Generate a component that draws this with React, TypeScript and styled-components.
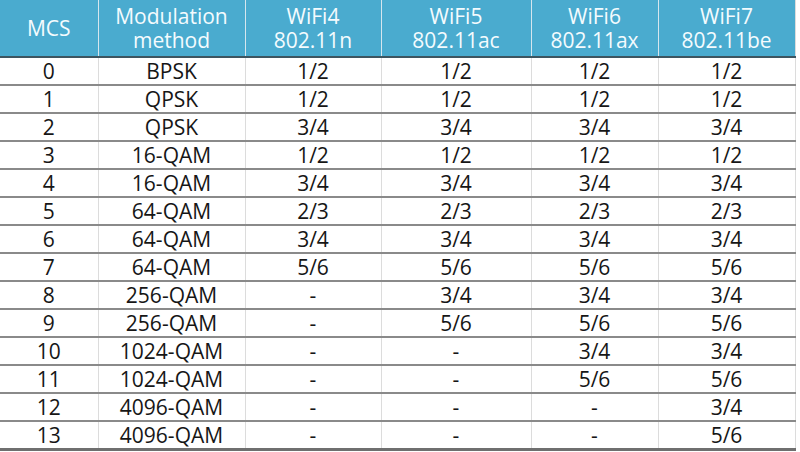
import { Fragment } from "react";
import styled, { createGlobalStyle } from "styled-components";

const GlobalStyle = createGlobalStyle`
   html, body {
      margin: 0;
      padding: 0;
      background: #ffffff;
   }
   body {
      font-family: "Open Sans", "Noto Sans", sans-serif;
   }
`;

const columns = [98, 147, 136, 150, 127, 137];

const headers = [
   ["MCS"],
   ["Modulation", "method"],
   ["WiFi4", "802.11n"],
   ["WiFi5", "802.11ac"],
   ["WiFi6", "802.11ax"],
   ["WiFi7", "802.11be"],
];

const rows: string[][] = [
   ["0", "BPSK", "1/2", "1/2", "1/2", "1/2"],
   ["1", "QPSK", "1/2", "1/2", "1/2", "1/2"],
   ["2", "QPSK", "3/4", "3/4", "3/4", "3/4"],
   ["3", "16-QAM", "1/2", "1/2", "1/2", "1/2"],
   ["4", "16-QAM", "3/4", "3/4", "3/4", "3/4"],
   ["5", "64-QAM", "2/3", "2/3", "2/3", "2/3"],
   ["6", "64-QAM", "3/4", "3/4", "3/4", "3/4"],
   ["7", "64-QAM", "5/6", "5/6", "5/6", "5/6"],
   ["8", "256-QAM", "-", "3/4", "3/4", "3/4"],
   ["9", "256-QAM", "-", "5/6", "5/6", "5/6"],
   ["10", "1024-QAM", "-", "-", "3/4", "3/4"],
   ["11", "1024-QAM", "-", "-", "5/6", "5/6"],
   ["12", "4096-QAM", "-", "-", "-", "3/4"],
   ["13", "4096-QAM", "-", "-", "-", "5/6"],
];

const Page = styled.div`
   width: 800px;
   height: 452px;
   overflow: hidden;
   background: #ffffff;
`;

const Table = styled.table`
   width: 795px;
   table-layout: fixed;
   border-collapse: collapse;
   border-bottom: 3px solid #6f6f6f;
`;

const HeadCell = styled.th`
   height: 56px;
   padding: 0;
   background: #4aabcf;
   color: #f4fbfe;
   font-weight: 400;
   font-size: 21px;
   line-height: 24px;
   text-align: center;
   vertical-align: middle;
   white-space: nowrap;
   border-left: 1px solid #d6e6ee;
   border-bottom: 2px solid #3d5560;
   &:first-child {
      border-left: none;
   }
`;

const BodyRow = styled.tr`
   border-top: 2px solid #8a8a8a;
   &:first-child {
      border-top: none;
   }
`;

const Cell = styled.td`
   height: 26px;
   padding: 0;
   color: #161616;
   font-size: 21px;
   line-height: 26px;
   text-align: center;
   border-left: 1px solid #dcdcdc;
   &:first-child {
      border-left: none;
   }
`;

const LastCol = styled.col`
   border-right: 1px solid #dcdcdc;
`;

export default function App() {
   return (
      <Page>
         <GlobalStyle />
         <Table>
            <colgroup>
               {columns.map((w, i) =>
                  i === columns.length - 1 ? (
                     <LastCol key={i} style={{ width: w }} />
                  ) : (
                     <col key={i} style={{ width: w }} />
                  )
               )}
            </colgroup>
            <thead>
               <tr>
                  {headers.map((h, i) => (
                     <HeadCell key={i}>
                        {h.map((line, j) => (
                           <Fragment key={j}>
                              {j > 0 && <br />}
                              {line}
                           </Fragment>
                        ))}
                     </HeadCell>
                  ))}
               </tr>
            </thead>
            <tbody>
               {rows.map((r, i) => (
                  <BodyRow key={i}>
                     {r.map((c, j) => (
                        <Cell key={j}>{c}</Cell>
                     ))}
                  </BodyRow>
               ))}
            </tbody>
         </Table>
      </Page>
   );
}
